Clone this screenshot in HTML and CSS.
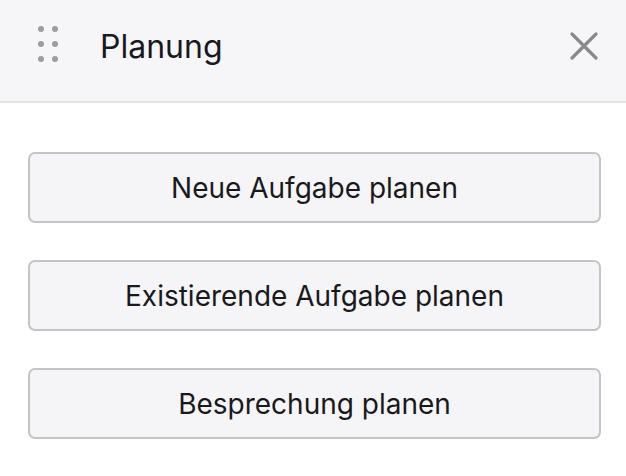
FILE: index.html
```html
<!DOCTYPE html>
<html lang="de">
<head>
    <meta charset="UTF-8">
    <meta name="viewport" content="width=device-width, initial-scale=1.0">
    <title>Planung</title>
    <link rel="stylesheet" href="styles.css">
</head>
<body>

<div class="panel-header">
    <span class="drag-handle">
        <svg width="20" height="37" viewBox="0 0 20 37">
            <circle cx="3" cy="3" r="3"/>
            <circle cx="17" cy="3" r="3"/>
            <circle cx="3" cy="18" r="3"/>
            <circle cx="17" cy="18" r="3"/>
            <circle cx="3" cy="33" r="3"/>
            <circle cx="17" cy="33" r="3"/>
        </svg>
    </span>
    <h1 class="panel-title">Planung</h1>
    <button class="close-btn" aria-label="Schließen">
        <svg width="30" height="30" viewBox="0 0 30 30">
            <path d="M3 3 L27 27 M27 3 L3 27"/>
        </svg>
    </button>
</div>

<div class="actions">
    <button class="action-btn">Neue Aufgabe planen</button>
    <button class="action-btn">Existierende Aufgabe planen</button>
    <button class="action-btn">Besprechung planen</button>
</div>

</body>
</html>
```

FILE: styles.css
```css
body {
    margin: 0;
    padding: 0;
    background-color: #fff;
    font-family: Inter, "Noto Sans", sans-serif;
    color: #19191d;
}
.panel-header {
    display: flex;
    align-items: center;
    box-sizing: border-box;
    height: 103px;
    background-color: #f6f6f8;
    border-bottom: 2px solid #e2e2e4;
    padding: 0 27px 9px 38px;
}
.drag-handle {
    display: flex;
    width: 20px;
    margin-top: -3px;
}
.drag-handle svg {
    fill: #9b9ba1;
}
.panel-title {
    flex: 1;
    margin: 0 0 0 42px;
    font-size: 32px;
    font-weight: 400;
}
.close-btn {
    background: none;
    border: none;
    padding: 0;
    display: flex;
    cursor: pointer;
}
.close-btn svg {
    stroke: #88888e;
    stroke-width: 3.2;
    stroke-linecap: round;
    fill: none;
}
.actions {
    display: flex;
    flex-direction: column;
    gap: 37px;
    padding: 49px 25px 0 28px;
}
.action-btn {
    height: 71px;
    background-color: #f5f5f7;
    border: 2px solid #c4c4c8;
    border-radius: 7px;
    font-family: Inter, "Noto Sans", sans-serif;
    font-size: 28px;
    color: #19191d;
    cursor: pointer;
}
```
